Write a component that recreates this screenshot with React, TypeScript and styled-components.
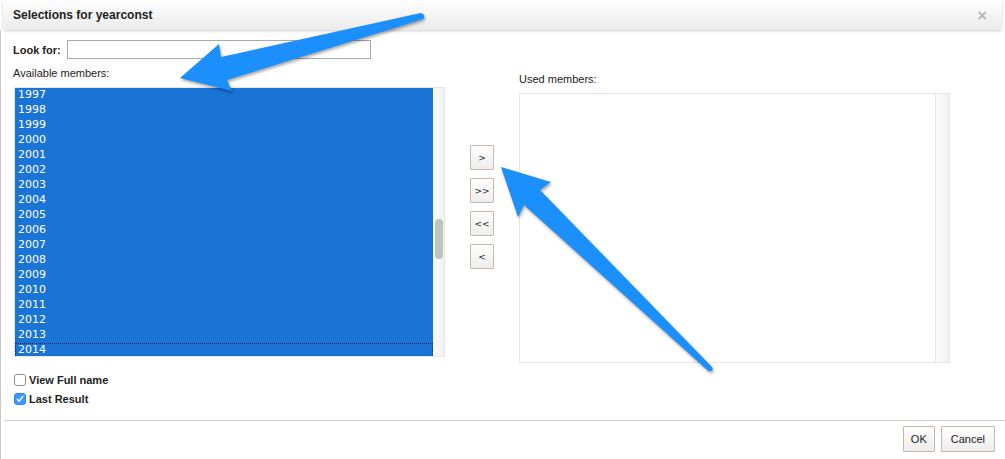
import React from 'react';
import styled, { createGlobalStyle } from 'styled-components';

const GlobalStyle = createGlobalStyle`
  html, body {
    margin: 0;
    padding: 0;
    background: #fff;
  }

  body {
    font-family: 'Liberation Sans', Arial, sans-serif;
    color: #222;
  }
`;

const YEARS = Array.from({ length: 18 }, (_, i) => 1997 + i);

const Dialog = styled.div`
  position: relative;
  width: 1005px;
  height: 459px;
  display: flex;
  flex-direction: column;
  overflow: hidden;
  background: #fff;
`;

const Header = styled.div`
  position: relative;
  z-index: 1;
  height: 30px;
  margin: 0 3px;
  padding: 0 14px 0 10px;
  display: flex;
  align-items: center;
  justify-content: space-between;
  background: linear-gradient(#fefefe, #ebebeb);
  border-radius: 0 0 3px 3px;
  box-shadow: 0 1px 3px rgba(0, 0, 0, 0.2);
`;

const Title = styled.span`
  font-size: 12px;
  font-weight: bold;
  color: #222;
`;

const Close = styled.span`
  font-family: 'DejaVu Sans', sans-serif;
  font-size: 14px;
  font-weight: bold;
  color: #b4b4b4;
  line-height: 1;
`;

const Body = styled.div`
  flex: 1;
  display: flex;
  flex-direction: column;
  border-left: 1px solid #c9c9c9;
`;

const Content = styled.div`
  padding: 10px 0 0 12px;
`;

const SearchRow = styled.div`
  display: flex;
  align-items: center;
  gap: 6px;
  height: 19px;
`;

const FieldLabel = styled.label`
  font-size: 11px;
  font-weight: bold;
`;

const SearchInput = styled.input`
  width: 304px;
  height: 19px;
  box-sizing: border-box;
  border: 1px solid #a9a9a9;
  padding: 0 3px;
  margin: 0;
  outline: none;
`;

const Columns = styled.div`
  display: flex;
  align-items: flex-start;
  margin-top: 7px;
`;

const MemberColumn = styled.div<{ $offset: number; $indent: number }>`
  display: flex;
  flex-direction: column;
  margin-top: ${p => p.$offset}px;

  & > div {
    margin-left: ${p => p.$indent}px;
  }
`;

const ColumnLabel = styled.span`
  font-size: 11px;
  line-height: 14px;
  margin-bottom: 7px;
`;

const ListBox = styled.div`
  width: 431px;
  height: 270px;
  box-sizing: border-box;
  border: 1px solid #e6e6e6;
  display: flex;
`;

const OptionList = styled.div<{ $filled: boolean }>`
  flex: 1;
  overflow: hidden;
  background: ${p => (p.$filled ? '#1a74d6' : '#fff')};
`;

const OptionRow = styled.div<{ $focused?: boolean }>`
  height: 15px;
  line-height: 14px;
  padding-left: 3px;
  font-family: 'DejaVu Sans', Verdana, sans-serif;
  font-size: 11px;
  color: #fff;
  box-sizing: border-box;
  outline: ${p => (p.$focused ? '1px dotted #0b2a66' : 'none')};
  outline-offset: -1px;
`;

const ScrollTrack = styled.div<{ $width: number; $edge: boolean }>`
  width: ${p => p.$width}px;
  border-left: ${p => (p.$edge ? '1px solid #e4e4e4' : 'none')};
  background: linear-gradient(90deg, #fbfbfb, #f1f1f1);
`;

const ScrollThumb = styled.div`
  width: 8px;
  height: 40px;
  margin: 131px 0 0 2px;
  border-radius: 4px;
  background: #c1c1c1;
`;

const MoveButtons = styled.div`
  display: flex;
  flex-direction: column;
  gap: 8px;
  margin: 79px 25px 0 25px;
`;

const MoveButton = styled.button`
  width: 24px;
  height: 25px;
  padding: 0;
  border: 1px solid #c5b7a9;
  border-radius: 1px;
  background: linear-gradient(#fefefe, #ededed);
  font-family: 'DejaVu Sans', sans-serif;
  font-size: 9px;
  color: #222;
`;

const Options = styled.div`
  display: flex;
  flex-direction: column;
  margin-top: 7px;
`;

const OptionLine = styled.label`
  height: 19px;
  display: flex;
  align-items: center;
  gap: 3px;
  margin-left: 1px;
  font-size: 11px;
  font-weight: bold;
`;

const Check = styled.span<{ $checked: boolean }>`
  width: 12px;
  height: 12px;
  box-sizing: border-box;
  display: flex;
  align-items: center;
  justify-content: center;
  border-radius: 3px;
  border: 1px solid ${p => (p.$checked ? '#2f87ef' : '#8f8f8f')};
  background: ${p => (p.$checked ? '#3b99fc' : '#fff')};
`;

const Footer = styled.div`
  margin-top: auto;
  margin-left: 3px;
  padding: 5px 10px 7px;
  border-top: 1px solid #cfcfcf;
  display: flex;
  justify-content: flex-end;
  gap: 6px;
`;

const FooterButton = styled.button<{ $pad: number }>`
  height: 26px;
  padding: 0 ${p => p.$pad}px;
  border: 1px solid #c5b7a9;
  border-radius: 1px;
  background: linear-gradient(#fefefe, #ededed);
  font-family: 'Liberation Sans', Arial, sans-serif;
  font-size: 11px;
  color: #222;
`;

const Annotations = styled.svg`
  position: absolute;
  top: 0;
  left: 0;
  z-index: 5;
  pointer-events: none;
  filter: drop-shadow(1px 2px 1.5px rgba(0, 0, 0, 0.35));
`;

function Checkbox ({ checked }: { checked: boolean }) {
  return (
    <Check $checked={checked}>
      {checked && (
        <svg width='8' height='8' viewBox='0 0 8 8'>
          <path d='M1.3 4.3 L3.2 6.2 L6.8 1.4' fill='none' stroke='#fff' strokeWidth='1.4' strokeLinecap='round' strokeLinejoin='round' />
        </svg>
      )}
    </Check>
  );
}

export default function App () {
  return (
    <Dialog>
      <GlobalStyle />
      <Header>
        <Title>Selections for yearconst</Title>
        <Close>×</Close>
      </Header>
      <Body>
        <Content>
          <SearchRow>
            <FieldLabel>Look for:</FieldLabel>
            <SearchInput type='text' />
          </SearchRow>

          <Columns>
            <MemberColumn $offset={0} $indent={1}>
              <ColumnLabel>Available members:</ColumnLabel>
              <ListBox>
                <OptionList $filled>
                  {YEARS.map(y => (
                    <OptionRow key={y} $focused={y === 2014}>{y}</OptionRow>
                  ))}
                </OptionList>
                <ScrollTrack $width={11} $edge={false}>
                  <ScrollThumb />
                </ScrollTrack>
              </ListBox>
            </MemberColumn>

            <MoveButtons>
              <MoveButton>&gt;</MoveButton>
              <MoveButton>&gt;&gt;</MoveButton>
              <MoveButton>&lt;&lt;</MoveButton>
              <MoveButton>&lt;</MoveButton>
            </MoveButtons>

            <MemberColumn $offset={6} $indent={0}>
              <ColumnLabel>Used members:</ColumnLabel>
              <ListBox>
                <OptionList $filled={false} />
                <ScrollTrack $width={13} $edge />
              </ListBox>
            </MemberColumn>
          </Columns>

          <Options>
            <OptionLine>
              <Checkbox checked={false} />
              View Full name
            </OptionLine>
            <OptionLine>
              <Checkbox checked />
              Last Result
            </OptionLine>
          </Options>
        </Content>

        <Footer>
          <FooterButton $pad={7}>OK</FooterButton>
          <FooterButton $pad={9}>Cancel</FooterButton>
        </Footer>
      </Body>

      <Annotations width='1005' height='459' viewBox='0 0 1005 459'>
        <path
          d='M420.6 12.9 Q425.8 14.2 423.4 19.1 L227 80 L232 91 L180 78 L219 44 L221 57 Z'
          fill='#1b8ffb'
        />
        <path
          d='M501 167 L551 182 L540 190 L712.2 367.2 Q714 371.6 708.4 371 L524 205 L518 217 Z'
          fill='#1b8ffb'
        />
      </Annotations>
    </Dialog>
  );
}
